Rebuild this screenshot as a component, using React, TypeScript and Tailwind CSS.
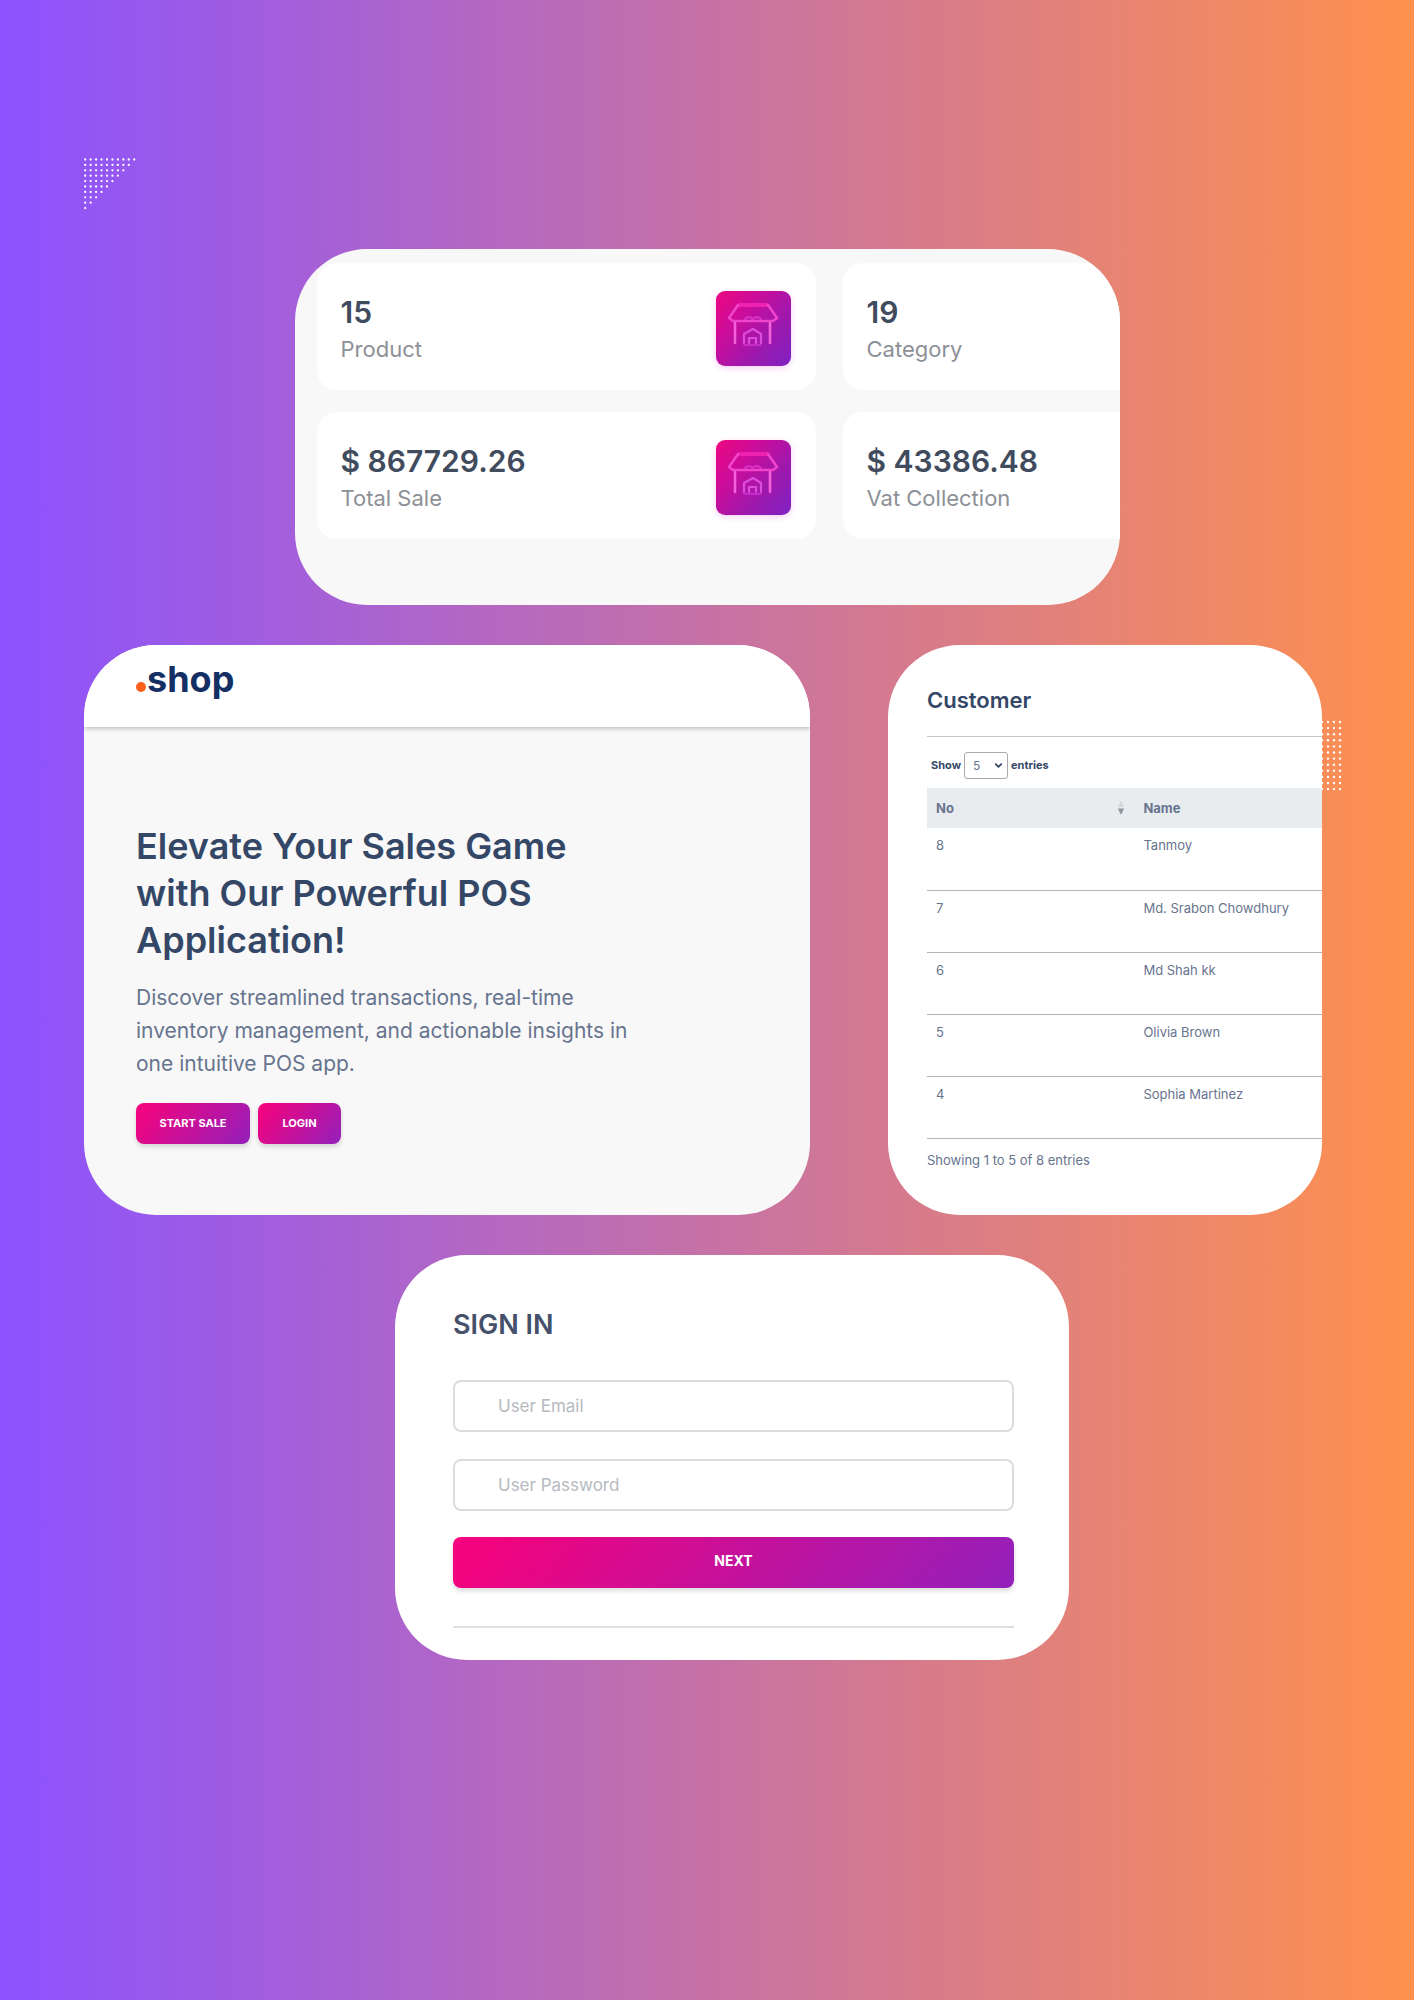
import React from "react";
import { ChevronDown } from "lucide-react";

const pinkButton =
  "bg-[linear-gradient(130deg,#f8037f_0%,#f1047f_8%,#9320bb_100%)] font-bold text-white shadow-[0_3px_5px_rgba(0,0,0,0.14)]";

function StoreIcon() {
  return (
    <svg viewBox="0 0 52 46" className="h-[46px] w-[52px]" fill="none" strokeWidth="2.6" strokeLinejoin="round" strokeLinecap="round" aria-hidden="true">
      <path d="M12 4H40" stroke="#ee22ae" strokeWidth="4" />
      <path d="M11 4L2 17L6 20H46L50 17L41 4" stroke="#f044cc" />
      <path d="M18 18Q22 14 26 18Q30 14 34 18" stroke="#d834c4" strokeWidth="2" />
      <path d="M8 22V42M43 22V42" stroke="#f45fdc" />
      <path d="M17 42V33L26 28L34 33V42M22 42V37H29V42" stroke="#dc4ddd" strokeWidth="2.2" />
      <path d="M17 44H34" stroke="#cf35d2" strokeWidth="1.5" />
    </svg>
  );
}

function Stat({ value, label, icon = false }: { value: string; label: string; icon?: boolean }) {
  return (
    <div className={`flex h-[127px] items-start justify-between bg-white pl-6 pr-[25px] ${icon ? "rounded-[20px]" : "rounded-l-[20px]"}`}>
      <div className="pt-[31px]">
        <p className="text-[30px] font-semibold leading-[36px] text-[#414b5e]">{value}</p>
        <p className="mt-[5px] text-[22px] leading-[28px] text-[#8d9096]">{label}</p>
      </div>
      {icon && (
        <div className="mt-7 flex h-[75px] w-[75px] justify-center rounded-[9px] bg-[linear-gradient(130deg,#ee077f_0%,#c80d9c_35%,#9f18ac_65%,#7f22c4_100%)] pt-[10px] shadow-[0_2px_6px_rgba(230,60,220,0.25)]">
          <StoreIcon />
        </div>
      )}
    </div>
  );
}

const triangleRows = [10, 9, 8, 7, 6, 5, 4, 3, 2, 1];

function TriangleDots() {
  return (
    <svg viewBox="0 0 52 52" className="ml-[84px] block h-[52px] w-[52px]" fill="#fff" aria-hidden="true">
      {triangleRows.map((n, r) =>
        Array.from({ length: n }, (_, c) => <circle key={`${r}-${c}`} cx={1.2 + c * 5.45} cy={1.5 + r * 5.4} r="1.15" />)
      )}
    </svg>
  );
}

function GridDots() {
  return (
    <svg viewBox="0 0 22 72" className="absolute -right-[20px] top-[75px] h-[72px] w-[22px]" fill="#fff" aria-hidden="true">
      {Array.from({ length: 12 }, (_, r) =>
        [2, 8, 14, 20].map((x) => <circle key={`${r}-${x}`} cx={x} cy={2 + r * 6.1} r="1.2" />)
      )}
    </svg>
  );
}

const customers = [
  { no: 8, name: "Tanmoy" },
  { no: 7, name: "Md. Srabon Chowdhury" },
  { no: 6, name: "Md Shah kk" },
  { no: 5, name: "Olivia Brown" },
  { no: 4, name: "Sophia Martinez" },
];

function CustomerPanel() {
  return (
    <div className="relative">
      <GridDots />
      <section className="relative h-full overflow-hidden rounded-[72px] bg-white pb-[45px] pl-[39px] pt-[40px] text-[13px] text-[#67748e]">
        <h2 className="text-[22px] font-semibold leading-[30px] text-[#344767]">Customer</h2>
        <hr className="mt-[21px] border-t border-[#c4c6c8]" />
        <label className="mt-[15px] flex h-[27px] items-center gap-[3px] pl-1 text-[11px] font-bold text-[#344767]">
          Show
          <span className="relative">
            <select defaultValue="5" className="block h-[27px] w-[44px] appearance-none rounded-[3px] border border-[#a9a9a9] bg-white pl-2 text-[12px] font-normal text-[#67748e]">
              <option>5</option>
              <option>10</option>
            </select>
            <ChevronDown className="pointer-events-none absolute right-1 top-2 h-[11px] w-[11px] text-[#344767]" strokeWidth={4} />
          </span>
          entries
        </label>
        <table className="mt-[9px] w-full table-fixed border-collapse text-left leading-[20px]">
          <thead>
            <tr className="h-10 bg-[#e9ecef]">
              <th className="w-[52%] pl-[9px] pr-[7px] font-bold">
                <span className="flex items-center justify-between">
                  No
                  <svg viewBox="0 0 8 16" className="h-4 w-2" aria-hidden="true">
                    <path d="M4 0.5L7 7H1Z" fill="#d4d7da" />
                    <path d="M4 15L7.2 8.5H0.8Z" fill="#8f979f" />
                  </svg>
                </span>
              </th>
              <th className="px-[11px] font-bold">Name</th>
            </tr>
          </thead>
          <tbody>
            {customers.map((c) => (
              <tr key={c.no} className="h-[62px] border-b border-[#b5b5b5] align-top">
                <td className="px-[9px] pt-[7px]">{c.no}</td>
                <td className="whitespace-nowrap pl-[11px] pt-[7px]">{c.name}</td>
              </tr>
            ))}
          </tbody>
        </table>
        <p className="mt-[11px] leading-[20px]">Showing 1 to 5 of 8 entries</p>
      </section>
    </div>
  );
}

function HeroPanel() {
  return (
    <section className="overflow-hidden rounded-[72px] bg-[#f8f8f8]">
      <header className="relative h-[82px] bg-white pl-[52px] pt-[12px] shadow-[0_1px_5px_rgba(0,0,0,0.3)]">
        <a href="#" aria-label=".shop" className="flex w-fit items-baseline text-[36px] font-bold leading-[44px] text-[#142f63]">
          <span className="mr-[1px] h-[10px] w-[10px] rounded-full bg-[#fb5f1c]" />
          shop
        </a>
      </header>
      <div className="pb-[71px] pl-[52px] pr-10 pt-24">
        <h1 className="max-w-[470px] text-[36px] font-semibold leading-[47px] text-[#344767]">
          Elevate Your Sales Game with Our Powerful POS Application!
        </h1>
        <p className="mt-[17px] max-w-[528px] text-[21px] leading-[33px] text-[#67748e]">
          Discover streamlined transactions, real-time inventory management, and actionable insights in one intuitive POS app.
        </p>
        <div className="mt-[23px] flex gap-2 text-[11px]">
          <button type="button" className={`h-[41px] w-[114px] rounded-lg ${pinkButton}`}>START SALE</button>
          <button type="button" className={`h-[41px] w-[83px] rounded-lg ${pinkButton}`}>LOGIN</button>
        </div>
      </div>
    </section>
  );
}

function SignInPanel() {
  const field =
    "block h-[52px] w-full rounded-lg border-2 border-[#dcdcdd] bg-white pl-[43px] text-[17px] text-[#495057] placeholder:text-[#b6babf] placeholder:opacity-100";
  return (
    <form className="w-full max-w-[674px] rounded-[72px] bg-white pb-8 pl-[58px] pr-[55px] pt-[50px]" onSubmit={(e) => e.preventDefault()}>
      <h2 className="text-[27px] font-semibold leading-[40px] text-[#45506a]">SIGN IN</h2>
      <input type="email" aria-label="User Email" placeholder="User Email" className={`mt-[35px] ${field}`} />
      <input type="password" aria-label="User Password" placeholder="User Password" className={`mt-[27px] ${field}`} />
      <button type="submit" className={`mt-[26px] h-[51px] w-full rounded-lg pb-1 text-[14px] ${pinkButton}`}>NEXT</button>
      <hr className="mt-[38px] border-t-2 border-[#dfdfe0]" />
    </form>
  );
}

export default function App() {
  return (
    <main className="min-h-screen bg-[linear-gradient(90deg,#8c52ff_0%,#ff914d_100%)] pb-[339px] pt-[158px] font-[Inter,sans-serif]">
      <TriangleDots />
      <section className="mx-auto mt-[39px] grid max-w-[825px] grid-cols-[499fr_277fr] gap-x-[27px] gap-y-[22px] overflow-hidden rounded-[72px] bg-[#f8f8f8] pb-[66px] pl-[22px] pt-[14px]">
        <Stat value="15" label="Product" icon />
        <Stat value="19" label="Category" />
        <Stat value="$ 867729.26" label="Total Sale" icon />
        <Stat value="$ 43386.48" label="Vat Collection" />
      </section>
      <div className="mt-10 grid grid-cols-[726fr_434fr] gap-[78px] pl-[84px] pr-[92px]">
        <HeroPanel />
        <CustomerPanel />
      </div>
      <div className="mt-10 flex justify-center pl-[50px]">
        <SignInPanel />
      </div>
    </main>
  );
}
